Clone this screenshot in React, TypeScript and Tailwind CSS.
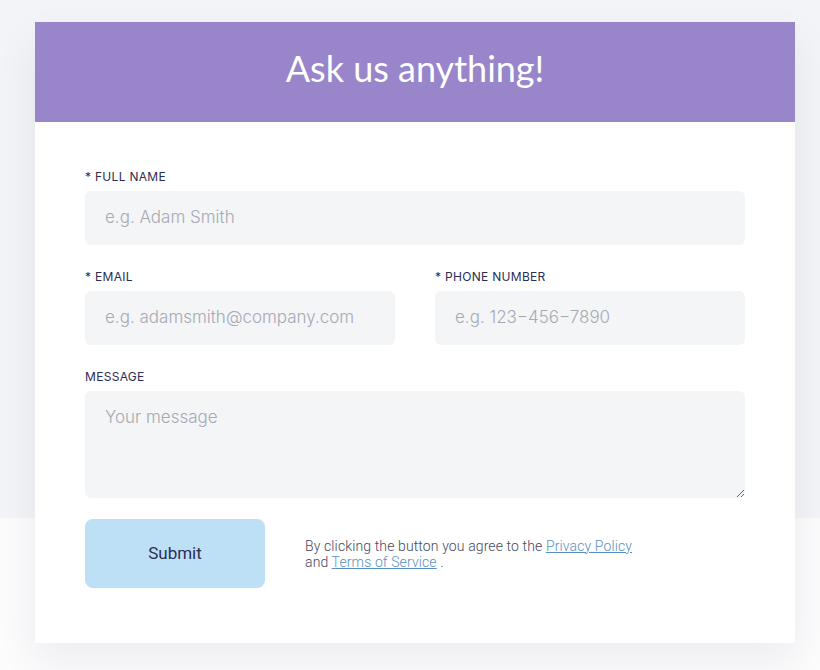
export default function App() {
  const label = "block text-[12px] leading-4 tracking-[0.3px] text-[#2b2d55] uppercase font-normal";
  const input =
    "block w-full h-[54px] rounded-[6px] bg-[#f4f5f7] px-5 pb-[2px] text-[17px] text-[#333] placeholder:text-[#a6aab3] outline-none";
  return (
    <div
      className="min-h-[670px] w-[820px] pt-[22px] pb-[27px] bg-[linear-gradient(#f3f4f7_518px,#fcfcfd_518px)]"
      style={{ fontFamily: "Roboto, 'Liberation Sans', sans-serif" }}
    >
      <div className="ml-[35px] w-[760px] bg-white shadow-[0_18px_40px_rgba(30,30,60,0.07)]">
        <div className="h-[100px] bg-[#9985c9] flex items-center justify-center">
          <h1 className="text-white text-[36px] leading-none pb-[8px]" style={{ fontFamily: "Lato, 'Open Sans', sans-serif" }}>
            Ask us anything!
          </h1>
        </div>
        <div className="px-[50px] pt-[47px] pb-[55px]" style={{ fontFamily: "Inter, 'Liberation Sans', sans-serif" }}>
          <div className="flex flex-col gap-[24px]">
            <div>
              <label className={label}>* Full name</label>
              <input className={input + " mt-[6px] font-light"} placeholder="e.g. Adam Smith" style={{ fontFamily: "Inter, sans-serif" }} />
            </div>
            <div className="grid grid-cols-2 gap-[40px]">
              <div>
                <label className={label}>* Email</label>
                <input className={input + " mt-[6px] font-light"} placeholder="e.g. adamsmith@company.com" style={{ fontFamily: "Inter, sans-serif" }} />
              </div>
              <div>
                <label className={label}>* Phone number</label>
                <input className={input + " mt-[6px] font-light"} placeholder="e.g. 123−456−7890" style={{ fontFamily: "Inter, sans-serif" }} />
              </div>
            </div>
            <div>
              <label className={label}>Message</label>
              <textarea
                className="block w-full h-[107px] mt-[6px] rounded-[6px] bg-[#f4f5f7] px-5 pt-[14px] text-[17px] font-light placeholder:text-[#a6aab3] outline-none"
                placeholder="Your message"
                style={{ fontFamily: "Inter, sans-serif" }}
              />
            </div>
          </div>
          <div className="flex items-center mt-[21px]">
            <button
              className="w-[180px] h-[69px] rounded-[8px] bg-[#bde0f7] text-[#2b2d55] text-[17px]"
              style={{ fontFamily: "Roboto, sans-serif" }}
            >
              Submit
            </button>
            <p className="ml-[40px] text-[14px] leading-4 tracking-[0.12px] text-[#454760] font-light" style={{ fontFamily: "Roboto, sans-serif" }}>
              By clicking the button you agree to the{" "}
              <a className="text-[#5a8fc4] underline">Privacy Policy</a>
              <br />
              and <a className="text-[#5a8fc4] underline">Terms of Service</a> .
            </p>
          </div>
        </div>
      </div>
    </div>
  );
}
